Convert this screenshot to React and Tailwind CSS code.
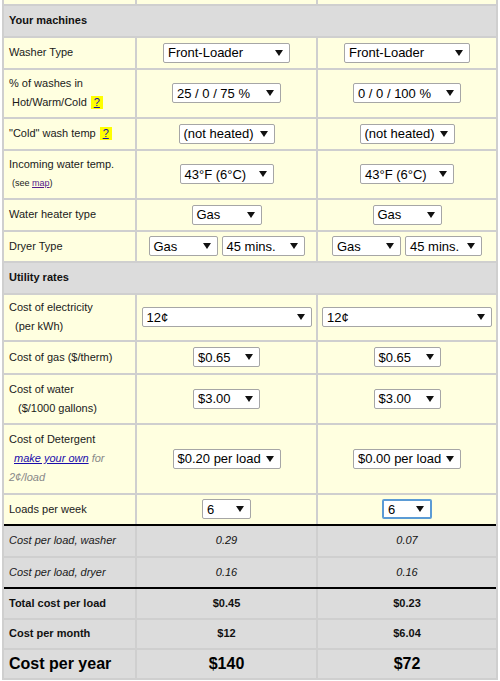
import React from "react";

const F = { fontFamily: '"Liberation Sans", Arial, sans-serif' };

function Arrow() {
  return (
    <svg width="8" height="6" viewBox="0 0 8 6" className="shrink-0">
      <path d="M0 0 H8 L4 6 Z" fill="#111" />
    </svg>
  );
}

function Sel({ w, children, focus }) {
  return (
    <div
      className={`flex h-[20px] items-center justify-between rounded-[2px] bg-white pl-[4px] pr-[6px] text-[13px] leading-none text-black ${
        focus ? "border-2 border-[#5b9bd5]" : "border border-[#a6a6a6]"
      }`}
      style={{ width: w }}
    >
      <span className="whitespace-nowrap">{children}</span>
      <Arrow />
    </div>
  );
}

function Q() {
  return (
    <span className="ml-[4px] inline-block bg-[#ffff00] px-[3px] text-[11px] leading-[13px] text-[#1a0dab] underline">
      ?
    </span>
  );
}

const Y = "bg-[#ffffe0]";
const G = "bg-[#dcdcdc]";

function Row({ h, label, a, b, bg = Y, top, labelClass = "" }) {
  return (
    <div
      className={`grid grid-cols-[131px_179px_178px] gap-x-[2px] ${
        top ? "border-t-2 border-black" : "mt-[2px]"
      }`}
      style={{ height: h }}
    >
      <div className={`${bg} flex items-center pb-[1px] pl-[5px] text-[11px] text-[#1a1a1a] ${labelClass}`}>
        {label}
      </div>
      <div className={`${bg} flex items-center justify-center gap-[4px] pb-[1px]`}>{a}</div>
      <div className={`${bg} flex items-center justify-center gap-[4px] pb-[1px]`}>{b}</div>
    </div>
  );
}

function Header({ h, children }) {
  return (
    <div className="mt-[2px] flex items-center bg-[#dcdcdc] pb-[1px] pl-[5px] text-[11px] font-bold text-[#111]" style={{ height: h }}>
      {children}
    </div>
  );
}

const It = ({ children }) => <span className="text-[11px] italic text-[#111]">{children}</span>;
const Bd = ({ children }) => <span className="text-[11px] font-bold text-[#111]">{children}</span>;
const Big = ({ children }) => <span className="text-[16px] font-bold text-black">{children}</span>;

export default function App() {
  return (
    <div className="min-h-[681px] w-[500px] bg-white" style={F}>
      <div className="ml-[2px] w-[496px] bg-[#cfcfcf] px-[2px] pb-[2px]">
        <div className="grid h-[4px] grid-cols-[131px_179px_178px] gap-x-[2px]">
          <div className={Y} />
          <div className={Y} />
          <div className={Y} />
        </div>

        <Header h={30}>Your machines</Header>

        <Row
          h={30}
          label="Washer Type"
          a={<Sel w={127}>Front-Loader</Sel>}
          b={<Sel w={126}>Front-Loader</Sel>}
        />
        <Row
          h={47}
          label={
            <div className="leading-[19px]">
              <div>% of washes in</div>
              <div className="pl-[3px]">
                Hot/Warm/Cold
                <Q />
              </div>
            </div>
          }
          a={<Sel w={109}>25 / 0 / 75 %</Sel>}
          b={<Sel w={108}>0 / 0 / 100 %</Sel>}
        />
        <Row
          h={30}
          label={
            <span>
              "Cold" wash temp
              <Q />
            </span>
          }
          a={<Sel w={96}>(not heated)</Sel>}
          b={<Sel w={95}>(not heated)</Sel>}
        />
        <Row
          h={47}
          label={
            <div className="leading-[19px]">
              <div>Incoming water temp.</div>
              <div className="pl-[3px] text-[9px]">
                (see <span className="text-[#551a8b] underline">map</span>)
              </div>
            </div>
          }
          a={<Sel w={94}>43°F (6°C)</Sel>}
          b={<Sel w={94}>43°F (6°C)</Sel>}
        />
        <Row
          h={30}
          label="Water heater type"
          a={<Sel w={70}>Gas</Sel>}
          b={<Sel w={69}>Gas</Sel>}
        />
        <Row
          h={29}
          label="Dryer Type"
          a={
            <>
              <Sel w={69}>Gas</Sel>
              <Sel w={83}>45 mins.</Sel>
            </>
          }
          b={
            <>
              <Sel w={69}>Gas</Sel>
              <Sel w={77}>45 mins.</Sel>
            </>
          }
        />

        <Header h={30}>Utility rates</Header>

        <Row
          h={45}
          label={
            <div className="leading-[19px]">
              <div>Cost of electricity</div>
              <div className="pl-[6px]">(per kWh)</div>
            </div>
          }
          a={<Sel w={170}>12¢</Sel>}
          b={<Sel w={170}>12¢</Sel>}
        />
        <Row
          h={31}
          label="Cost of gas ($/therm)"
          a={<Sel w={67}>$0.65</Sel>}
          b={<Sel w={67}>$0.65</Sel>}
        />
        <Row
          h={48}
          label={
            <div className="leading-[19px]">
              <div>Cost of water</div>
              <div className="pl-[9px]">($/1000 gallons)</div>
            </div>
          }
          a={<Sel w={67}>$3.00</Sel>}
          b={<Sel w={67}>$3.00</Sel>}
        />
        <Row
          h={68}
          label={
            <div className="leading-[19px]">
              <div>Cost of Detergent</div>
              <div className="pl-[5px] italic text-[#888]">
                <span className="text-[#1a0dab] underline">make your own</span> for
              </div>
              <div className="italic text-[#888]">2¢/load</div>
            </div>
          }
          a={<Sel w={108}>$0.20 per load</Sel>}
          b={<Sel w={108}>$0.00 per load</Sel>}
        />
        <Row
          h={29}
          label="Loads per week"
          a={<Sel w={49}>6</Sel>}
          b={
            <Sel w={50} focus>
              6
            </Sel>
          }
        />

        <Row top h={32} bg={G} labelClass="italic" label="Cost per load, washer" a={<It>0.29</It>} b={<It>0.07</It>} />
        <Row h={29} bg={G} labelClass="italic" label="Cost per load, dryer" a={<It>0.16</It>} b={<It>0.16</It>} />
        <Row top h={31} bg={G} labelClass="font-bold text-[#111]" label="Total cost per load" a={<Bd>$0.45</Bd>} b={<Bd>$0.23</Bd>} />
        <Row h={28} bg={G} labelClass="font-bold text-[#111]" label="Cost per month" a={<Bd>$12</Bd>} b={<Bd>$6.04</Bd>} />
        <Row
          h={28}
          bg={G}
          labelClass="!text-[16px] font-bold !text-black"
          label="Cost per year"
          a={<Big>$140</Big>}
          b={<Big>$72</Big>}
        />
      </div>
    </div>
  );
}
